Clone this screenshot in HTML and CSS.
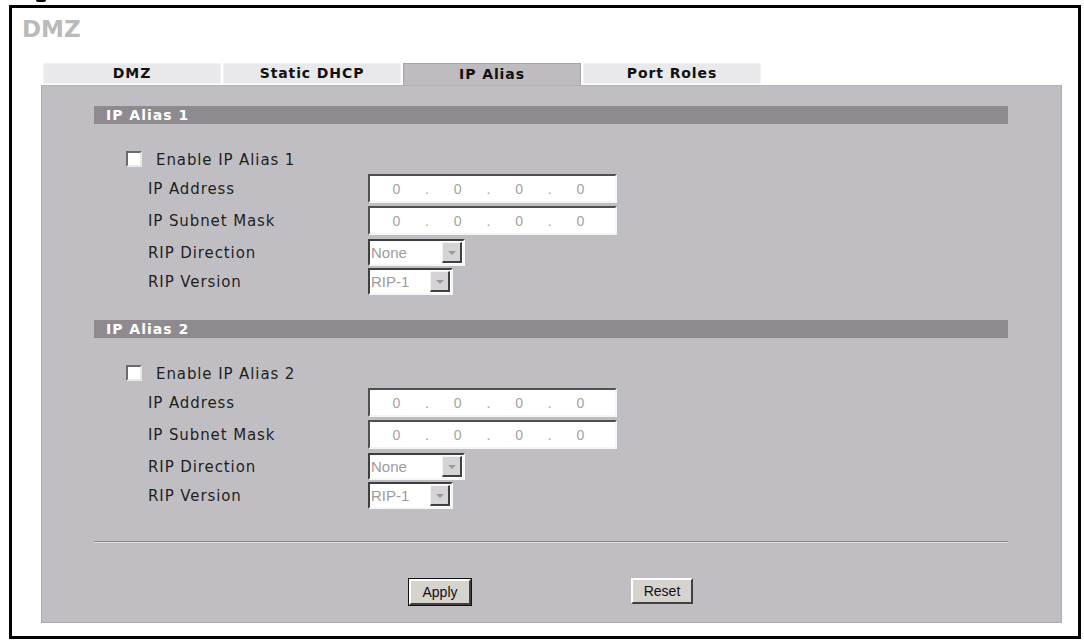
FILE: index.html
```html
<!DOCTYPE html>
<html>
<head>
<meta charset="utf-8">
<link rel="stylesheet" href="styles.css">
</head>
<body>
<div class="caption"><span class="blob"></span></div>
<div class="frame">
  <div class="title">DMZ</div>
  <div class="tabs">
    <div class="tab">DMZ</div>
    <div class="tab">Static DHCP</div>
    <div class="tab active">IP Alias</div>
    <div class="tab">Port Roles</div>
  </div>
  <div class="panel">
    <div class="section">
      <div class="bar">IP Alias 1</div>
      <div class="enable"><span class="check"></span><span class="lbl">Enable IP Alias 1</span></div>
      <div class="row r-ip"><span class="lbl">IP Address</span><div class="ipbox"><span>0</span><span>.</span><span>0</span><span>.</span><span>0</span><span>.</span><span>0</span></div></div>
      <div class="row r-ip"><span class="lbl">IP Subnet Mask</span><div class="ipbox"><span>0</span><span>.</span><span>0</span><span>.</span><span>0</span><span>.</span><span>0</span></div></div>
      <div class="row r-sel"><span class="lbl">RIP Direction</span><div class="sel wide"><span class="val">None</span><span class="arrow"></span></div></div>
      <div class="row r-sel"><span class="lbl">RIP Version</span><div class="sel narrow"><span class="val">RIP-1</span><span class="arrow"></span></div></div>
    </div>
    <div class="section second">
      <div class="bar">IP Alias 2</div>
      <div class="enable"><span class="check"></span><span class="lbl">Enable IP Alias 2</span></div>
      <div class="row r-ip"><span class="lbl">IP Address</span><div class="ipbox"><span>0</span><span>.</span><span>0</span><span>.</span><span>0</span><span>.</span><span>0</span></div></div>
      <div class="row r-ip"><span class="lbl">IP Subnet Mask</span><div class="ipbox"><span>0</span><span>.</span><span>0</span><span>.</span><span>0</span><span>.</span><span>0</span></div></div>
      <div class="row r-sel"><span class="lbl">RIP Direction</span><div class="sel wide"><span class="val">None</span><span class="arrow"></span></div></div>
      <div class="row r-sel"><span class="lbl">RIP Version</span><div class="sel narrow"><span class="val">RIP-1</span><span class="arrow"></span></div></div>
    </div>
    <div class="divider"></div>
    <div class="buttons">
      <span class="btn default">Apply</span>
      <span class="btn">Reset</span>
    </div>
  </div>
</div>
</body>
</html>
```
FILE: styles.css
```css
html, body {
  margin: 0;
  padding: 0;
  background: #ffffff;
}
body {
  width: 1084px;
  height: 640px;
  overflow: hidden;
  font-family: "DejaVu Sans", Verdana, sans-serif;
}
.caption {
  height: 5px;
  display: flex;
  padding-left: 36px;
}
.blob {
  width: 10px;
  height: 2px;
  background: #000;
  border-radius: 0 0 4px 4px;
}
.frame {
  margin-left: 9px;
  width: 1066px;
  height: 628px;
  border: 3px solid #000;
  background: #fff;
  overflow: hidden;
}
.title {
  padding: 7px 0 0 10px;
  height: 28px;
  line-height: 28px;
  font-size: 23px;
  font-weight: bold;
  color: #bababa;
}
.tabs {
  display: flex;
  gap: 2px;
  margin: 20px 0 0 31px;
  height: 22px;
  align-items: flex-start;
}
.tab {
  width: 178px;
  height: 21px;
  box-sizing: border-box;
  background: #e9e8ea;
  border: 1px solid #f2f2f2;
  text-align: center;
  font-size: 14px;
  font-weight: bold;
  letter-spacing: 0.9px;
  line-height: 19px;
  color: #111;
}
.tab.active {
  height: 22px;
  background: #bfbcc1;
  border: 1px solid #a5a3a7;
  border-bottom: none;
  line-height: 20px;
}
.panel {
  margin-left: 29px;
  width: 1021px;
  height: 538px;
  box-sizing: border-box;
  background: #c1bec3;
  border: 1px solid #aeabb0;
  border-top-color: #b5b2b7;
  padding: 20px 53px 0 52px;
}
.bar {
  height: 18px;
  line-height: 18px;
  background: #8f8a90;
  color: #fff;
  font-size: 14px;
  font-weight: bold;
  letter-spacing: 1px;
  padding-left: 12px;
}
.lbl {
  font-size: 15px;
  letter-spacing: 0.9px;
  color: #1e1e1e;
}
.enable {
  display: flex;
  align-items: center;
  height: 18px;
  margin: 27px 0 0 32px;
}
.check {
  width: 12px;
  height: 12px;
  background: #fff;
  border-style: solid;
  border-width: 2px;
  border-color: #6d6a6e #e8e7e9 #e8e7e9 #6d6a6e;
  margin-right: 14px;
  margin-top: -3px;
}
.row {
  display: flex;
  align-items: center;
  padding-left: 54px;
}
.row .lbl {
  width: 220px;
  flex: none;
}
.r-ip {
  height: 29px;
  margin-top: 3px;
}
.enable + .r-ip {
  margin-top: 5px;
}
.r-sel {
  height: 27px;
  margin-top: 2px;
}
.r-ip + .r-sel {
  margin-top: 4px;
}
.ipbox {
  width: 249px;
  height: 29px;
  box-sizing: border-box;
  background: #fff;
  border-style: solid;
  border-width: 2px;
  border-color: #505050 #f4f4f4 #f4f4f4 #505050;
  display: flex;
  align-items: center;
  padding-left: 11px;
  font-family: "Liberation Sans", Arial, sans-serif;
  font-size: 14px;
  color: #a3a3a3;
}
.ipbox span {
  width: 30.7px;
  text-align: center;
}
.sel {
  height: 27px;
  box-sizing: border-box;
  background: #fff;
  border-style: solid;
  border-width: 2px;
  border-color: #3e3e3e #f6f6f6 #f6f6f6 #3e3e3e;
  display: flex;
  align-items: stretch;
  font-family: "Liberation Sans", Arial, sans-serif;
  font-size: 15px;
  color: #9c9c9c;
}
.sel.wide { width: 97px; }
.sel.narrow { width: 85px; }
.val {
  flex: 1;
  line-height: 23px;
  padding-left: 1px;
}
.arrow {
  width: 20px;
  margin: 1px 1px 1px 0;
  box-sizing: border-box;
  background: #d6d3d6;
  border-style: solid;
  border-width: 1px 2px 2px 1px;
  border-color: #f4f4f4 #404040 #404040 #f4f4f4;
  position: relative;
}
.arrow::after {
  content: "";
  position: absolute;
  left: 5px;
  top: 8px;
  border-left: 4px solid transparent;
  border-right: 4px solid transparent;
  border-top: 4px solid #9a9a9a;
}
.section.second {
  margin-top: 25px;
}
.divider {
  margin-top: 32px;
  height: 0;
  border-top: 1px solid #8c898d;
  border-bottom: 1px solid #dedce0;
}
.buttons {
  display: flex;
  gap: 160px;
  margin: 35px 0 0 315px;
}
.btn {
  width: 62px;
  height: 26px;
  box-sizing: border-box;
  background: #d6d3ce;
  border-style: solid;
  border-width: 2px;
  border-color: #ffffff #404040 #404040 #ffffff;
  font-family: "Liberation Sans", Arial, sans-serif;
  font-size: 14px;
  color: #111;
  text-align: center;
  line-height: 22px;
}
.btn.default {
  outline: 1px solid #111;
  margin-top: 1px;
}
```
